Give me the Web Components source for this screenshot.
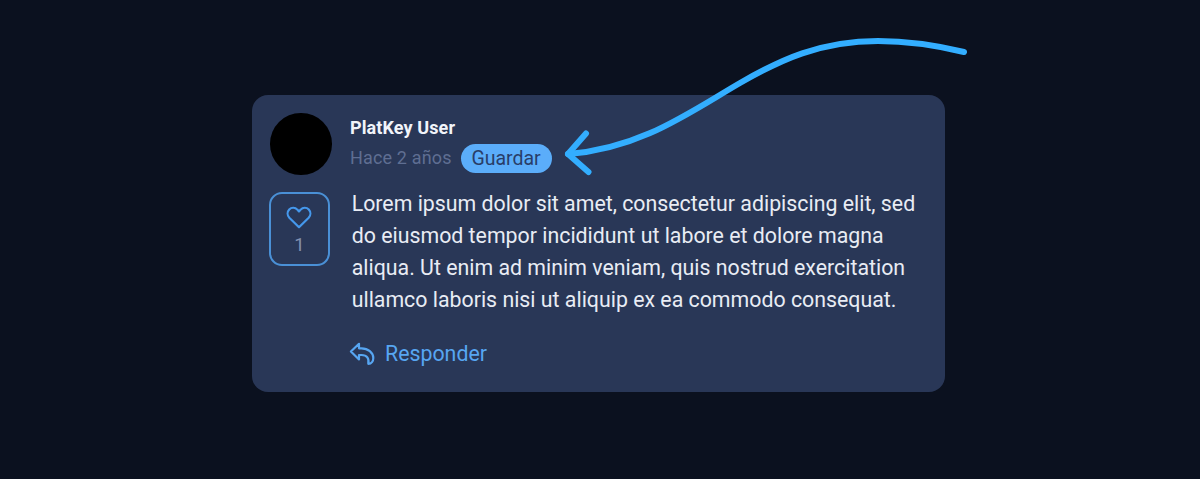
<!DOCTYPE html>
<html lang="es">
<head>
<meta charset="utf-8">
<title>Comentario</title>
<style>
html,body{margin:0;height:100%;background:#0b111f}
</style>
</head>
<body>
<comment-stage>
  <comment-card>
    <user-avatar slot="avatar"></user-avatar>
    <comment-meta slot="meta"><span slot="name">PlatKey User</span><span slot="time">Hace 2 años</span><save-pill slot="action">Guardar</save-pill></comment-meta>
    <like-button slot="like">1</like-button>
    <comment-text slot="text">Lorem ipsum dolor sit amet, consectetur adipiscing elit, sed do eiusmod tempor incididunt ut labore et dolore magna aliqua. Ut enim ad minim veniam, quis nostrud exercitation ullamco laboris nisi ut aliquip ex ea commodo consequat.</comment-text>
    <reply-link slot="reply">Responder</reply-link>
  </comment-card>
  <pointer-arrow slot="overlay"></pointer-arrow>
</comment-stage>
<script>
const define = (name, html) => customElements.define(name, class extends HTMLElement {
  constructor() {
    super();
    this.attachShadow({ mode: 'open' }).innerHTML = html;
  }
});

define('comment-stage', `<style>
  :host{display:block;position:relative;box-sizing:border-box;width:1200px;height:479px;padding:95px 255px 87px 252px;background:#0b111f;overflow:hidden;font-family:Roboto,"Liberation Sans",sans-serif}
</style><slot></slot><slot name="overlay"></slot>`);

define('comment-card', `<style>
  :host{display:grid;box-sizing:border-box;height:297px;grid-template-columns:62px 1fr;grid-template-rows:62px auto auto;column-gap:18px;align-content:start;padding:18px 16px 0 17px;border-radius:16px;background:#293757}
  .like{padding-top:17px}
  .text{padding:12.5px 0 0 2.7px}
  .reply{grid-column:2;padding-top:22px}
</style>
<slot name="avatar"></slot><slot name="meta"></slot>
<div class="like"><slot name="like"></slot></div>
<div class="text"><slot name="text"></slot></div>
<div class="reply"><slot name="reply"></slot></div>`);

define('user-avatar', `<style>
  :host{display:block;width:61.5px;height:61.5px;margin-left:1px;border-radius:50%;background:#000}
</style>`);

define('comment-meta', `<style>
  :host{display:block;color:#f1f4fa}
  .name{font-size:18px;font-weight:700;line-height:22px;letter-spacing:.1px;padding:4px 0 0 1px}
  .row{display:flex;align-items:center;gap:9px;height:30px;padding:4px 0 0 1px;font-size:18px;color:#5f6e92}
  .time{letter-spacing:.15px;white-space:nowrap;margin-top:-1px}
</style>
<div class="name"><slot name="name"></slot></div>
<div class="row"><span class="time"><slot name="time"></slot></span><slot name="action"></slot></div>`);

define('save-pill', `<style>
  :host{display:flex;align-items:center;justify-content:center;width:91px;height:29px;border-radius:15px;background:#5badfa;color:#293d68;font-size:19.5px}
</style><slot></slot>`);

define('like-button', `<style>
  :host{display:flex;flex-direction:column;align-items:center;box-sizing:border-box;width:61px;height:74px;padding-top:12px;border:2px solid #4a90d6;border-radius:13px;color:#8391b0;font-size:18.5px;line-height:22px}
  svg{display:block;margin:0 1px 5px 0}
</style>
<svg width="26" height="23" viewBox="0 0 26 23" fill="none" stroke="#4598ec" stroke-width="2.2" stroke-linejoin="round"><path d="M13 21.2 3.3 11.7C1.1 9.4 1.1 5.800 3.200 3.500C5.500 1.100 9.200 1.200 11.300 3.600L13 5.400L14.700 3.600C16.800 1.200 20.500 1.100 22.800 3.500C24.900 5.800 24.900 9.400 22.700 11.700Z"/></svg>
<slot></slot>`);

define('comment-text', `<style>
  :host{display:block;width:580px;font-size:21.33px;line-height:32px;color:#e8ecf4}
</style><slot></slot>`);

define('reply-link', `<style>
  :host{display:flex;align-items:center;gap:10px;height:32px;font-size:21.33px;color:#57a6f2}
  svg{display:block}
</style>
<svg width="26" height="24" viewBox="0 0 26 24" fill="none" stroke="#57a6f2" stroke-width="2.200" stroke-linejoin="round" stroke-linecap="round"><path d="M1.900 9.500 10 1.800V6.300H12.500C19 6.300 24.300 10.500 24.300 16C24.300 19 22.500 21.800 19.300 21.800C20.300 16.500 18 13 12.500 13H10V17.500Z"/></svg>
<slot></slot>`);

define('pointer-arrow', `<style>
  :host{position:absolute;left:0;top:0;pointer-events:none}
  svg{display:block}
</style>
<svg width="1200" height="200" viewBox="0 0 1200 200" fill="none" stroke="#33aeff" stroke-width="6" stroke-linecap="round" stroke-linejoin="round"><path d="M964 52C935 45 906 41 878 41C820 41 780 60 740 83C690 112 640 149 568 154"/><path d="M586 133.500 568 154 588.500 172"/></svg>`);
</script>
</body>
</html>
